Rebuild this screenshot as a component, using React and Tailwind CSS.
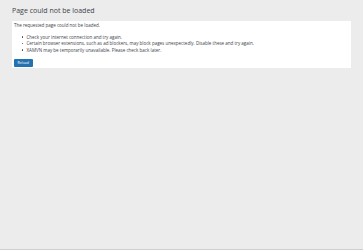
import React from "react";

const tips = [
  "Check your internet connection and try again.",
  "Certain browser extensions, such as ad blockers, may block pages unexpectedly. Disable these and try again.",
  "XAMVN may be temporarily unavailable. Please check back later.",
];

export default function App() {
  return (
    <div className="flex h-[250px] w-[363px] flex-col overflow-hidden border-b border-[#cfcfcf] bg-[#ececec] font-['Open_Sans',sans-serif] text-[#3c434a]">
      <div className="px-3 pt-[5px]">
        <h1 className="text-[7px] leading-[12px] font-normal text-[#3c434a]">
          Page could not be loaded
        </h1>
        <div className="mt-[4px] flex flex-col items-start bg-white pt-[1px] pr-[2px] pb-[1.6px] pl-[2px] text-[4.5px] leading-[6.5px]">
          <p>The requested page could not be loaded.</p>
          <ul className="mt-[5.25px] flex flex-col">
            {tips.map((tip) => (
              <li key={tip} className="flex items-center">
                <span className="ml-[7.5px] mr-[3.5px] size-[1.5px] rounded-full bg-[#3c434a]" />
                <span>{tip}</span>
              </li>
            ))}
          </ul>
          <button
            type="button"
            className="mt-[5.5px] h-[8px] rounded-[1px] bg-[#2271b1] px-[3.5px] text-[3.6px] leading-[8px] text-white"
          >
            Reload
          </button>
        </div>
      </div>
    </div>
  );
}
